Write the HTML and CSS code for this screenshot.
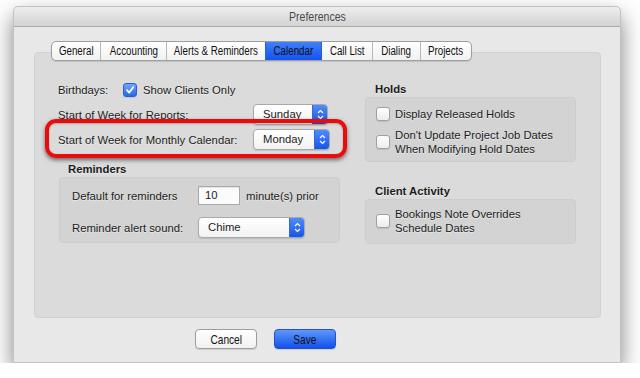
FILE: index.html
```html
<!DOCTYPE html>
<html lang="en">
<head>
  <meta charset="UTF-8" />
  <title>Preferences</title>
  <link rel="stylesheet" href="styles.css">
</head>
<body>

  <div class="window">
    <div class="titlebar"><span class="narrow">Preferences</span></div>

    <div class="content">
      <!-- Tabs -->
      <div class="tabs">
        <span class="tab tab-general"><span class="narrow">General</span></span>
        <span class="tab tab-accounting"><span class="narrow">Accounting</span></span>
        <span class="tab tab-alerts"><span class="narrow">Alerts &amp; Reminders</span></span>
        <span class="tab tab-calendar active"><span class="narrow">Calendar</span></span>
        <span class="tab tab-calls"><span class="narrow">Call List</span></span>
        <span class="tab tab-dialing"><span class="narrow">Dialing</span></span>
        <span class="tab tab-projects"><span class="narrow">Projects</span></span>
      </div>

      <div class="panel">
        <div class="col-left">
          <div class="row">
            <span class="label label-short">Birthdays:</span>
            <span class="check">
              <span class="box checked">
                <svg width="10" height="10" viewBox="0 0 10 10"><path d="M2 5.2 L4.2 7.6 L8.2 2.2" fill="none" stroke="#fff" stroke-width="1.8" stroke-linecap="round" stroke-linejoin="round"/></svg>
              </span>
              Show Clients Only
            </span>
          </div>

          <div class="row">
            <span class="label">Start of Week for Reports:</span>
            <div class="select select-day">
              <span class="value">Sunday</span>
              <span class="arrows">
                <svg width="7" height="11" viewBox="0 0 7 11"><path d="M1 4 L3.5 1.5 L6 4 M1 7 L3.5 9.5 L6 7" fill="none" stroke="#fff" stroke-width="1.2"/></svg>
              </span>
            </div>
          </div>

          <!-- Highlighted row -->
          <div class="row highlight">
            <span class="label">Start of Week for Monthly Calendar:</span>
            <div class="select select-month">
              <span class="value">Monday</span>
              <span class="arrows">
                <svg width="7" height="11" viewBox="0 0 7 11"><path d="M1 4 L3.5 1.5 L6 4 M1 7 L3.5 9.5 L6 7" fill="none" stroke="#fff" stroke-width="1.2"/></svg>
              </span>
            </div>
          </div>

          <div class="group-title group-title-left">Reminders</div>
          <div class="group group-reminders">
            <div class="group-row">
              <span class="label label-rem">Default for reminders</span>
              <span class="input">10</span>
              <span class="suffix">minute(s) prior</span>
            </div>
            <div class="group-row group-row-select">
              <span class="label label-rem">Reminder alert sound:</span>
              <div class="select select-sound">
                <span class="value">Chime</span>
                <span class="arrows">
                  <svg width="7" height="11" viewBox="0 0 7 11"><path d="M1 4 L3.5 1.5 L6 4 M1 7 L3.5 9.5 L6 7" fill="none" stroke="#fff" stroke-width="1.2"/></svg>
                </span>
              </div>
            </div>
          </div>
        </div>

        <div class="col-right">
          <div class="group-title">Holds</div>
          <div class="group group-holds">
            <div class="check-row">
              <span class="box"></span>
              <span>Display Released Holds</span>
            </div>
            <div class="check-row">
              <span class="box"></span>
              <span>Don't Update Project Job Dates<br>When Modifying Hold Dates</span>
            </div>
          </div>

          <div class="group-title group-title-gap">Client Activity</div>
          <div class="group group-client">
            <div class="check-row">
              <span class="box"></span>
              <span>Bookings Note Overrides<br>Schedule Dates</span>
            </div>
          </div>
        </div>
      </div>

      <div class="buttons">
        <button class="btn"><span class="narrow">Cancel</span></button>
        <button class="btn btn-save"><span class="narrow">Save</span></button>
      </div>
    </div>
  </div>

</body>
</html>
```

FILE: styles.css
```css
body {
  margin: 0;
  background-color: #fff;
  font-family: "Liberation Sans", Arial, sans-serif;
  font-size: 11.3px;
  color: #1c1c1c;
}

/* condensed system font look */
.narrow {
  display: inline-block;
  white-space: nowrap;
  transform: scaleX(0.78);
}

.window {
  width: 608px;
  height: 357px;
  margin: 6px 0 0 13px;
  box-sizing: border-box;
  background-color: #e8e8e8;
  border: 1px solid #c2c2c2;
  border-radius: 5px 5px 0 0;
  box-shadow: 0 10px 22px rgba(0, 0, 0, 0.5);
}

.titlebar {
  display: flex;
  justify-content: center;
  height: 19px;
  line-height: 19px;
  background: linear-gradient(#eeeeee, #d3d3d3);
  border-bottom: 1px solid #acacac;
  border-radius: 5px 5px 0 0;
  font-size: 13.5px;
  color: #4a4a4a;
}

.content {
  padding: 14px 19px 0 20px;
}

/* Tabs */
.tabs {
  position: relative;
  z-index: 1;
  display: flex;
  width: fit-content;
  height: 18px;
  margin-left: 17px;
  margin-bottom: -9px;
  border: 1px solid #9e9e9e;
  border-radius: 5px;
  overflow: hidden;
  background: linear-gradient(#ffffff, #f1f1f1);
  box-shadow: 0 1px 1px rgba(0, 0, 0, 0.12);
  font-size: 12.5px;
  color: #111;
}

.tab {
  display: flex;
  justify-content: center;
  box-sizing: border-box;
  line-height: 18px;
  border-left: 1px solid #b8b8b8;
}

.tab:first-child {
  border-left: none;
}

.tab-general { width: 48px; }
.tab-accounting { width: 66px; }
.tab-alerts { width: 99px; }
.tab-calendar { width: 56px; }
.tab-calls { width: 51px; }
.tab-dialing { width: 48px; }
.tab-projects { width: 51px; }

.tab.active {
  background: linear-gradient(#3f80fa, #1453ee);
  border-left-color: #2a5fd0;
}

.tab.active + .tab {
  border-left-color: #2a5fd0;
}

/* Panel */
.panel {
  display: flex;
  height: 238px;
  padding: 26px 0 0 23px;
  background-color: #dbdbdb;
  border: 1px solid #d1d1d1;
  border-radius: 4px;
  text-shadow: 0 1px 0 rgba(255, 255, 255, 0.5);
}

.col-left {
  width: 307px;
  display: flex;
  flex-direction: column;
}

.col-right {
  width: 211px;
  margin-top: 2px;
}

.row {
  display: flex;
  align-items: center;
  height: 21px;
  margin-bottom: 4px;
}

.label {
  width: 195px;
  flex-shrink: 0;
}

.label-short {
  width: 65px;
}

.highlight {
  margin: -10px 18px -8px -13px;
  padding: 6px 13px 4px 9px;
  border: 4px solid #ea0b0b;
  border-radius: 11px;
  box-shadow: 0 2px 4px rgba(0, 0, 0, 0.55), inset 0 1px 2px rgba(0, 0, 0, 0.25);
}

/* Checkboxes */
.check {
  display: flex;
  align-items: center;
  gap: 6px;
}

.box {
  display: flex;
  align-items: center;
  justify-content: center;
  width: 12px;
  height: 12px;
  flex-shrink: 0;
  border: 1px solid #a0a0a0;
  border-radius: 3px;
  background: linear-gradient(#ffffff, #ececec);
  box-shadow: 0 1px 1px rgba(0, 0, 0, 0.1);
}

.box.checked {
  border-color: #2b5fca;
  background: linear-gradient(#73a6f9, #2766e6);
}

/* Popup selects */
.select {
  display: flex;
  height: 19px;
  border: 1px solid #a9a9a9;
  border-radius: 4px;
  overflow: hidden;
  background: linear-gradient(#ffffff, #f2f2f2);
  box-shadow: 0 1px 1px rgba(0, 0, 0, 0.12);
  text-shadow: none;
}

.select .value {
  flex: 1;
  padding-left: 9px;
  line-height: 18px;
}

.select .arrows {
  width: 14px;
  display: flex;
  align-items: center;
  justify-content: center;
  background: linear-gradient(#4f8cfa, #1655ec);
  border-left: 1px solid #3569d4;
}

.select-day {
  width: 73px;
}

.select-month {
  width: 75px;
}

.select-sound {
  width: 105px;
}

/* Groups */
.group-title {
  height: 16px;
  line-height: 16px;
  margin-left: 10px;
  font-weight: bold;
}

.group-title-left {
  margin-top: 11px;
}

.group-title-gap {
  margin-top: 21px;
}

.group {
  background-color: #d3d3d3;
  border: 1px solid #cdcdcd;
  border-radius: 4px;
  box-sizing: border-box;
}

.group-reminders {
  width: 281px;
  height: 66px;
  margin-left: 1px;
  padding: 8px 0 0 12px;
}

.group-row {
  display: flex;
  align-items: center;
  height: 19px;
}

.group-row-select {
  height: 21px;
  margin-top: 12px;
}

.label-rem {
  width: 126px;
}

.input {
  width: 34px;
  height: 17px;
  line-height: 17px;
  padding-left: 6px;
  background-color: #fbfbfb;
  border: 1px solid #a9a9a9;
  box-shadow: inset 0 1px 1px rgba(0, 0, 0, 0.1);
  text-shadow: none;
}

.suffix {
  margin-left: 6px;
}

.group-holds {
  height: 65px;
  padding: 9px 0 0 10px;
}

.group-client {
  height: 45px;
  padding: 7px 0 0 10px;
}

.check-row {
  display: flex;
  align-items: center;
  gap: 5px;
  line-height: 14px;
  margin-bottom: 7px;
}

/* Bottom buttons */
.buttons {
  display: flex;
  gap: 17px;
  padding: 11px 0 0 161px;
}

.btn {
  display: flex;
  justify-content: center;
  align-items: center;
  width: 62px;
  height: 20px;
  padding: 0;
  border: 1px solid #9d9d9d;
  border-radius: 4px;
  background: linear-gradient(#ffffff, #f0f0f0);
  box-shadow: 0 1px 1px rgba(0, 0, 0, 0.12);
  font-family: "Liberation Sans", Arial, sans-serif;
  font-size: 13px;
  color: #111;
}

.btn-save {
  border-color: #2451c4;
  background: linear-gradient(#5f98fa, #1150ee);
}
```
